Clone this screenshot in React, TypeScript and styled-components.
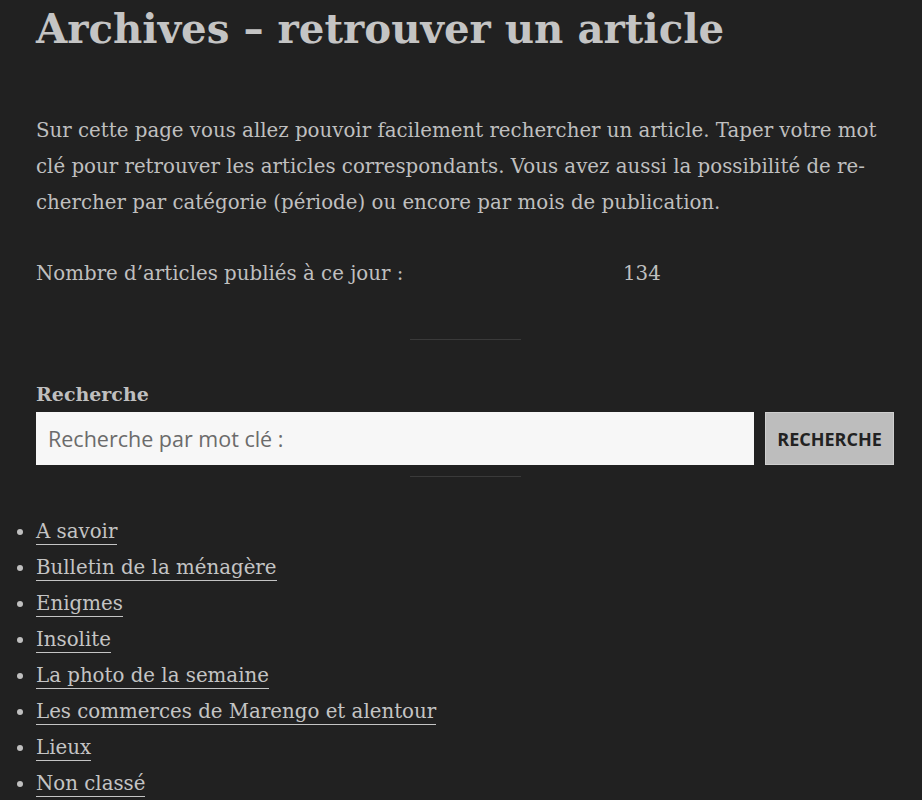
import React from 'react';
import styled, { createGlobalStyle } from 'styled-components';

const GlobalStyle = createGlobalStyle`
  html, body {
    margin: 0;
    padding: 0;
    background: #212121;
  }
  body {
    font-family: "DejaVu Serif", "Liberation Serif", serif;
    color: #bfbfbf;
  }
`;

const Page = styled.div`
  padding: 0 28px 40px 36px;
  font-size: 19.8px;
  line-height: 36px;
`;

const Title = styled.h1`
  margin: -1px 0 54px;
  font-size: 40.3px;
  line-height: 60px;
  font-weight: 700;
  color: #c4c4c4;
`;

const Intro = styled.p`
  margin: 0 0 35px;
`;

const CountRow = styled.div`
  display: grid;
  grid-template-columns: 587px auto;
`;

const Divider = styled.hr<{ $top: number; $bottom: number }>`
  width: 111px;
  margin: ${(p) => `${p.$top}px auto ${p.$bottom}px`};
  border: 0;
  border-top: 1px solid #3a3a3a;
`;

const SearchLabel = styled.label`
  display: block;
  font-size: 19px;
  font-weight: 700;
  line-height: 30px;
  margin-bottom: 3px;
`;

const SearchRow = styled.form`
  display: flex;
  gap: 11px;
  margin: 0;
`;

const SearchInput = styled.input`
  flex: 1;
  height: 53px;
  box-sizing: border-box;
  border: 0;
  background: #f7f7f7;
  padding: 0 12px;
  font-family: "Open Sans", "Noto Sans", sans-serif;
  font-size: 21.5px;
  color: #333;
  outline: none;
  &::placeholder {
    color: #6b6b6b;
  }
`;

const SearchButton = styled.button`
  width: 129px;
  height: 53px;
  padding: 0;
  box-sizing: border-box;
  border: 1px solid #cfcfcf;
  background: #bdbdbd;
  color: #222;
  font-family: "Open Sans", "Noto Sans", sans-serif;
  font-weight: 700;
  font-size: 18px;
  text-transform: uppercase;
`;

const CategoryList = styled.ul`
  margin: 0;
  padding: 0;
  list-style: disc;
`;

const CategoryLink = styled.a`
  color: #c4c4c4;
  text-decoration: none;
  border-bottom: 1px solid #c4c4c4;
  padding-bottom: 1px;
`;

const categories = [
  'A savoir',
  'Bulletin de la ménagère',
  'Enigmes',
  'Insolite',
  'La photo de la semaine',
  'Les commerces de Marengo et alentour',
  'Lieux',
  'Non classé',
];

export default function App() {
  return (
    <>
      <GlobalStyle />
      <Page>
        <Title>Archives – retrouver un article</Title>
        <Intro>
          Sur cette page vous allez pouvoir facilement rechercher un article. Taper votre mot clé pour
          retrouver les articles correspondants. Vous avez aussi la possibilité de re&shy;chercher par
          catégorie (période) ou encore par mois de publication.
        </Intro>
        <CountRow>
          <span>Nombre d’articles publiés à ce jour :</span>
          <span>134</span>
        </CountRow>
        <Divider $top={47} $bottom={39} />
        <SearchLabel htmlFor="s">Recherche</SearchLabel>
        <SearchRow onSubmit={(e) => e.preventDefault()}>
          <SearchInput id="s" placeholder="Recherche par mot clé :" />
          <SearchButton type="submit">Recherche</SearchButton>
        </SearchRow>
        <Divider $top={11} $bottom={37} />
        <CategoryList>
          {categories.map((c) => (
            <li key={c}>
              <CategoryLink href="#">{c}</CategoryLink>
            </li>
          ))}
        </CategoryList>
      </Page>
    </>
  );
}
